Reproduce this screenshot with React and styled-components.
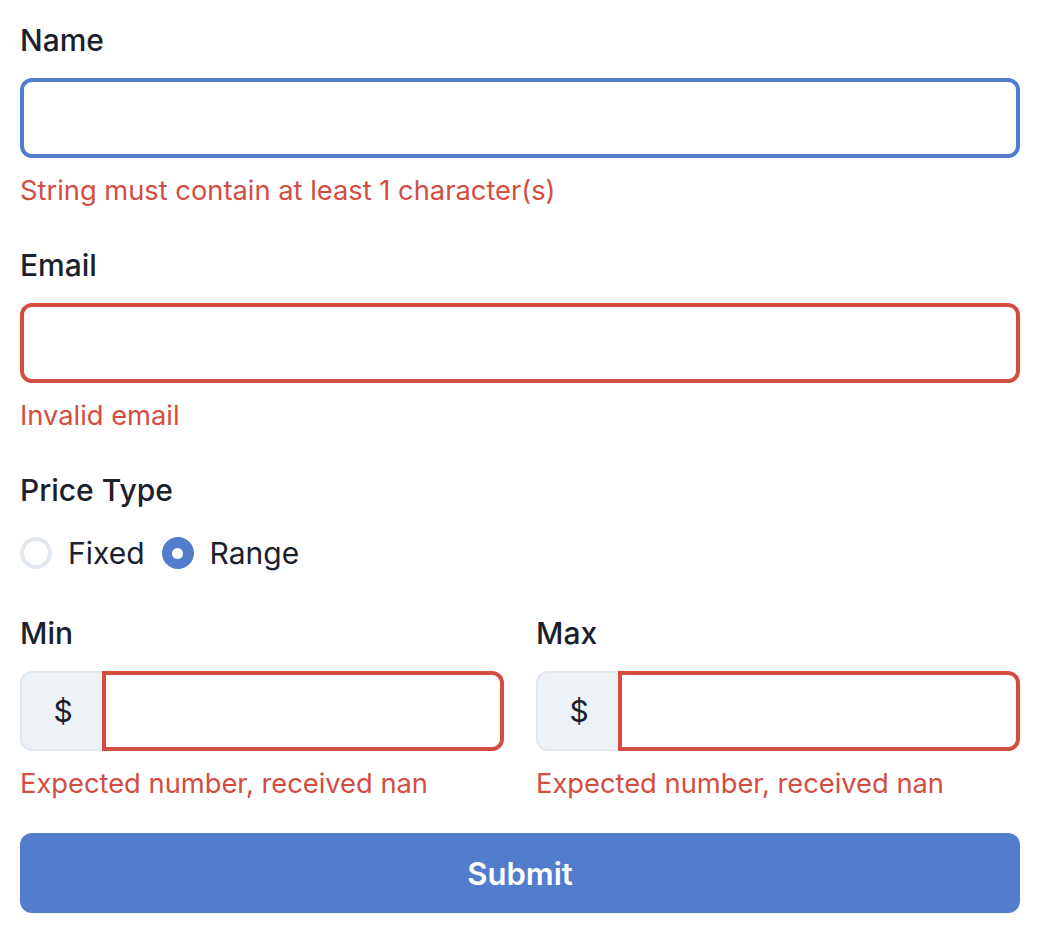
import React from 'react';
import styled, { createGlobalStyle } from 'styled-components';

const Global = createGlobalStyle`
  html, body { margin: 0; padding: 0; background: #fff; }
  body {
    font-family: Inter, "Noto Sans", "Liberation Sans", sans-serif;
    color: #1a202c;
  }
  * { box-sizing: border-box; }
`;

const Form = styled.form`
  width: 1044px;
  padding: 20px 24px 24px 20px;
  display: flex;
  flex-direction: column;
`;

const Field = styled.div`
  display: flex;
  flex-direction: column;
  margin-bottom: ${p => p.$gap ?? 36}px;
`;

const Label = styled.label`
  font-size: 30px;
  font-weight: 500;
  line-height: 40px;
  height: 40px;
  margin-bottom: ${p => p.$mb ?? 18}px;
`;

const Input = styled.input`
  display: block;
  height: 80px;
  width: 100%;
  flex: ${p => (p.$addon ? '1 1 auto' : 'none')};
  min-width: 0;
  border: 4px solid ${p => (p.$state === 'focus' ? '#527dcc' : p.$state === 'error' ? '#d44d41' : '#e2e8f0')};
  border-radius: ${p => (p.$addon ? '0 12px 12px 0' : '12px')};
  padding: 0 28px;
  font-size: 30px;
  font-family: inherit;
  outline: none;
  background: #fff;
`;

const Error = styled.div`
  color: #d44d41;
  font-size: 27.3px;
  line-height: 36px;
  margin-top: 15px;
`;

const RadioRow = styled.div`
  display: flex;
  align-items: center;
  gap: 17px;
  height: 40px;
`;

const RadioOption = styled.label`
  display: flex;
  align-items: center;
  gap: 16px;
  font-size: 30px;
  line-height: 40px;
`;

const RadioCircle = styled.span`
  width: 32px;
  height: 32px;
  border-radius: 50%;
  border: 4px solid ${p => (p.$checked ? '#527dcc' : '#e2e8f0')};
  background: ${p => (p.$checked ? '#527dcc' : '#fff')};
  display: flex;
  align-items: center;
  justify-content: center;
  &::after {
    content: '';
    display: ${p => (p.$checked ? 'block' : 'none')};
    width: 11px;
    height: 11px;
    border-radius: 50%;
    background: #fff;
  }
`;

const Columns = styled.div`
  display: grid;
  grid-template-columns: 1fr 1fr;
  gap: 32px;
`;

const Group = styled.div`
  display: flex;
  height: 80px;
`;

const Addon = styled.div`
  flex: none;
  width: 82px;
  height: 80px;
  background: #edf2f7;
  border: 2px solid #e2e8f0;
  border-right: none;
  border-radius: 12px 0 0 12px;
  display: flex;
  align-items: center;
  justify-content: center;
  padding-left: 2px;
  font-size: 30px;
  color: #1a202c;
`;

const Submit = styled.button`
  display: block;
  height: 80px;
  width: 100%;
  border: none;
  border-radius: 12px;
  background: #527dcc;
  color: #fff;
  font-family: inherit;
  font-size: 31px;
  font-weight: 600;
  margin-top: 31px;
`;

function PriceField({ label }) {
  return (
    <Field $gap={0}>
      <Label>{label}</Label>
      <Group>
        <Addon>$</Addon>
        <Input $addon $state="error" />
      </Group>
      <Error>Expected number, received nan</Error>
    </Field>
  );
}

export default function App() {
  return (
    <>
      <Global />
      <Form onSubmit={e => e.preventDefault()}>
        <Field>
          <Label>Name</Label>
          <Input $state="focus" />
          <Error>String must contain at least 1 character(s)</Error>
        </Field>
        <Field>
          <Label>Email</Label>
          <Input $state="error" />
          <Error>Invalid email</Error>
        </Field>
        <Field $gap={40}>
          <Label $mb={23}>Price Type</Label>
          <RadioRow>
            <RadioOption>
              <RadioCircle />
              Fixed
            </RadioOption>
            <RadioOption>
              <RadioCircle $checked />
              Range
            </RadioOption>
          </RadioRow>
        </Field>
        <Columns>
          <PriceField label="Min" />
          <PriceField label="Max" />
        </Columns>
        <Submit type="submit">Submit</Submit>
      </Form>
    </>
  );
}
